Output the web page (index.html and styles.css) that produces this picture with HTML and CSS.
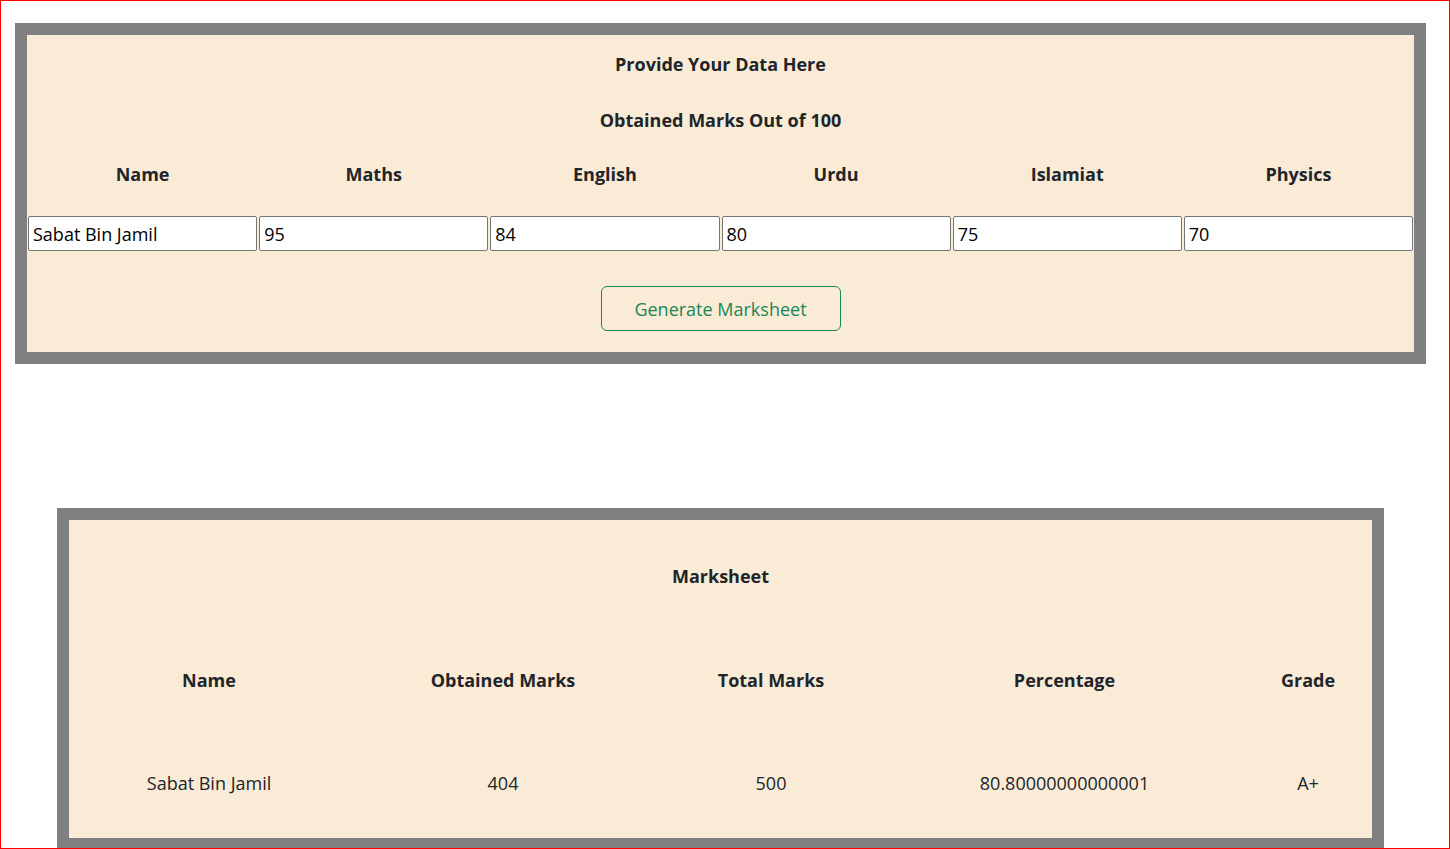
FILE: index.html
```html
<!DOCTYPE html>
<html>
<head>
<meta charset="utf-8">
<title>Marksheet</title>
<link rel="stylesheet" href="styles.css">
</head>
<body>
<div class="page">
  <section class="entry">
    <div class="title">Provide Your Data Here</div>
    <div class="subtitle">Obtained Marks Out of 100</div>
    <div class="fields">
      <div class="label">Name</div>
      <div class="label">Maths</div>
      <div class="label">English</div>
      <div class="label">Urdu</div>
      <div class="label">Islamiat</div>
      <div class="label">Physics</div>
      <input class="field" type="text" value="Sabat Bin Jamil">
      <input class="field" type="text" value="95">
      <input class="field" type="text" value="84">
      <input class="field" type="text" value="80">
      <input class="field" type="text" value="75">
      <input class="field" type="text" value="70">
    </div>
    <div class="actions">
      <button class="btn" type="button">Generate Marksheet</button>
    </div>
  </section>

  <section class="sheet">
    <div class="sheet-title">Marksheet</div>
    <div class="sheet-grid">
      <div class="head">Name</div>
      <div class="head">Obtained Marks</div>
      <div class="head">Total Marks</div>
      <div class="head">Percentage</div>
      <div class="head">Grade</div>
      <div class="cell">Sabat Bin Jamil</div>
      <div class="cell">404</div>
      <div class="cell">500</div>
      <div class="cell">80.80000000000001</div>
      <div class="cell">A+</div>
    </div>
  </section>
</div>
</body>
</html>
```

FILE: styles.css
```css
html, body {
  margin: 0;
  padding: 0;
  background: #ffffff;
}

body {
  font-family: "Open Sans", "Noto Sans", Arial, sans-serif;
  color: #212529;
}

.page {
  height: 849px;
  box-sizing: border-box;
  border: 1px solid #ff0000;
  overflow: hidden;
}

.entry {
  margin: 22px 23px 0 14px;
  border: 12px solid #808080;
  background: #faebd7;
  padding-bottom: 21px;
}

.title,
.subtitle {
  text-align: center;
  font-weight: 700;
  font-size: 18px;
  line-height: 24px;
}

.title {
  padding-top: 17px;
  height: 41px;
}

.subtitle {
  padding-top: 15px;
  height: 39px;
}

.fields {
  display: grid;
  grid-template-columns: repeat(6, 1fr);
  column-gap: 2px;
  padding: 0 1px;
}

.label {
  text-align: center;
  font-weight: 700;
  font-size: 18px;
  line-height: 24px;
  padding-top: 15px;
  height: 54px;
  box-sizing: border-box;
  margin-bottom: 15px;
}

.field {
  box-sizing: border-box;
  width: 100%;
  min-width: 0;
  height: 35px;
  margin: 0;
  padding: 1px 4px;
  border: 1px solid #767676;
  border-radius: 2px;
  background: #ffffff;
  font-family: inherit;
  font-size: 18px;
  color: #000000;
}

.actions {
  display: flex;
  justify-content: center;
  padding-top: 35px;
}

.btn {
  box-sizing: border-box;
  width: 240px;
  height: 45px;
  border: 1px solid #198754;
  border-radius: 6px;
  background: transparent;
  color: #198754;
  font-family: inherit;
  font-size: 18px;
  padding: 0;
}

.sheet {
  box-sizing: border-box;
  width: 1327px;
  margin: 144px 0 0 56px;
  border: 12px solid #808080;
  background: #faebd7;
}

.sheet-title {
  height: 112px;
  display: flex;
  align-items: center;
  justify-content: center;
  font-weight: 700;
  font-size: 18px;
}

.sheet-grid {
  display: grid;
  grid-template-columns: 280px 308px 228px 359px 128px;
  grid-template-rows: 96px 110px;
  font-size: 18px;
}

.head,
.cell {
  display: flex;
  align-items: center;
  justify-content: center;
}

.head {
  font-weight: 700;
}
```
